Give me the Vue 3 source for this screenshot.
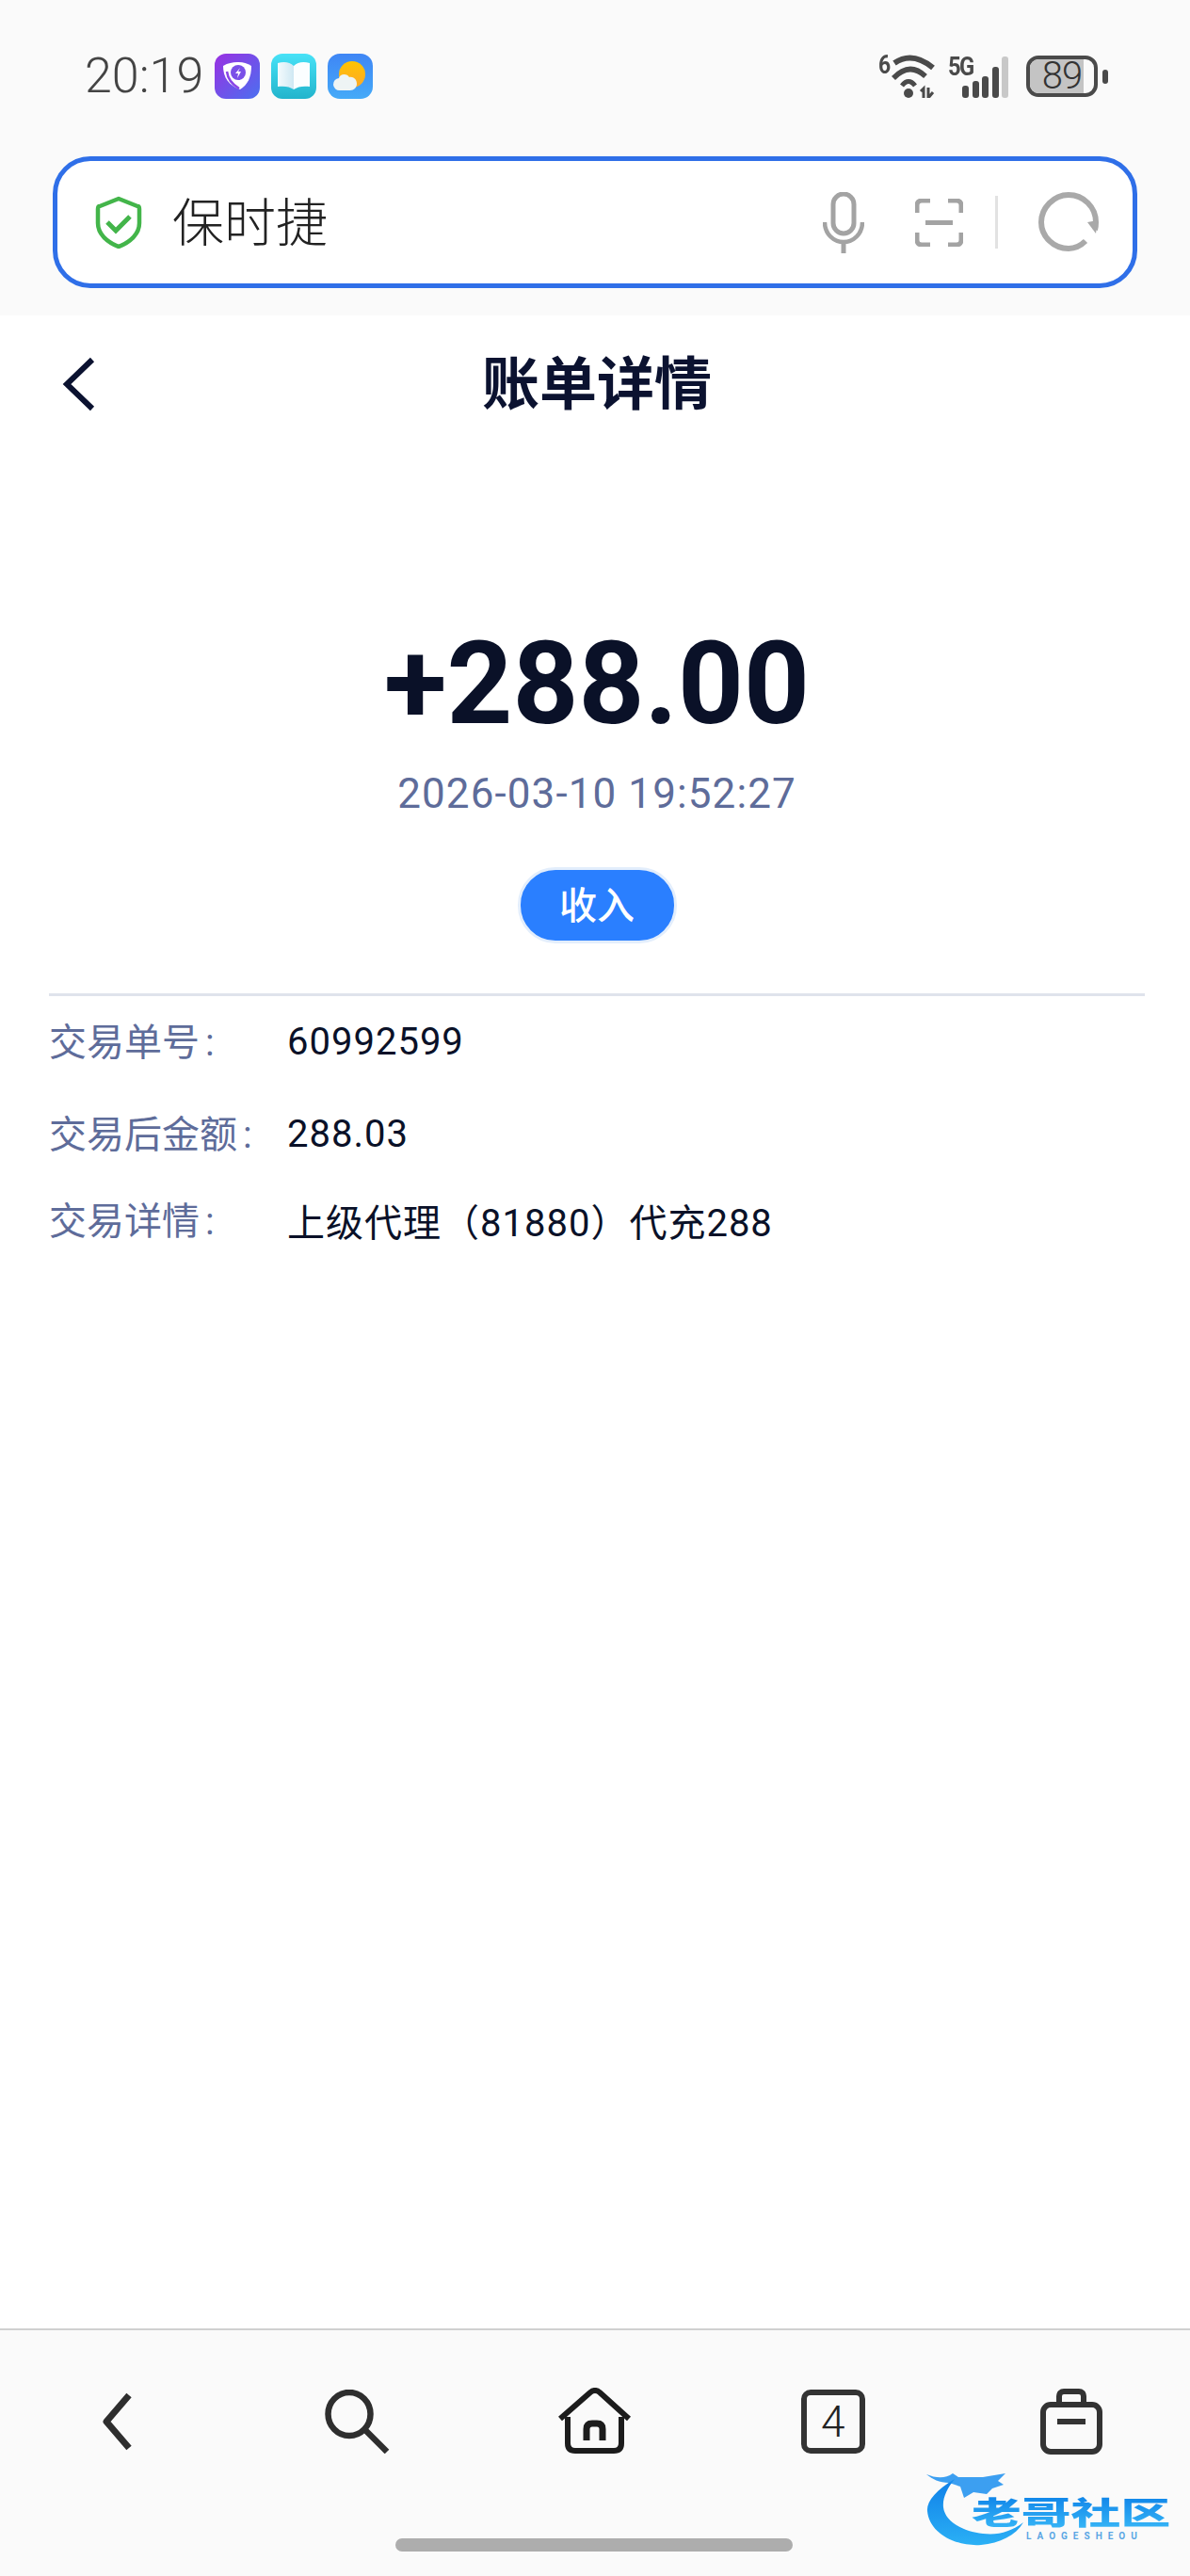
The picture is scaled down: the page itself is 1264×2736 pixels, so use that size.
<template>
  <div class="page">
    <!-- 状态栏 + 地址栏 -->
    <header class="browser-top">
      <div class="status-bar">
        <span class="time">20:19</span>
        <div class="app-icons">
          <svg class="app-icon" viewBox="0 0 48 48">
            <defs>
              <linearGradient id="purple" x1="0" y1="0" x2="1" y2="1">
                <stop offset="0" stop-color="#9a30e2" />
                <stop offset="1" stop-color="#4a70f0" />
              </linearGradient>
            </defs>
            <rect width="48" height="48" rx="12" fill="url(#purple)" />
            <path d="M9 13c5-3 10-4 15-4 5 0 10 1 15 4 0 12-4 20-12 25C15 34 9 25 9 13z" fill="#fff" />
            <circle cx="25" cy="20" r="8" fill="#7a50e8" />
            <path d="M27 15l-5 6h3l-1 5 4-7h-3z" fill="#fff" />
            <path d="M13 19c1 8 6 14 13 18" fill="none" stroke="#8a46e6" stroke-width="2.500" />
          </svg>
          <svg class="app-icon" viewBox="0 0 48 48">
            <defs>
              <linearGradient id="teal" x1="0" y1="0" x2="0" y2="1">
                <stop offset="0" stop-color="#48e2f7" />
                <stop offset="1" stop-color="#22b4cc" />
              </linearGradient>
              <linearGradient id="page-left" x1="0" y1="0" x2="1" y2="0">
                <stop offset="0" stop-color="#f4fbfd" />
                <stop offset="1" stop-color="#cfe8f3" />
              </linearGradient>
            </defs>
            <rect width="48" height="48" rx="12" fill="url(#teal)" />
            <path d="M7 10c7-2 13-1 17 3v25c-4-3-10-4-17-3z" fill="url(#page-left)" />
            <path d="M41 10c-7-2-13-1-17 3v25c4-3 10-4 17-3z" fill="#fbfeff" />
          </svg>
          <svg class="app-icon" viewBox="0 0 48 48">
            <defs>
              <linearGradient id="sky" x1="0" y1="0" x2="0" y2="1">
                <stop offset="0" stop-color="#3f86f5" />
                <stop offset="1" stop-color="#45aaf8" />
              </linearGradient>
              <linearGradient id="sun" x1="0" y1="0" x2="0" y2="1">
                <stop offset="0" stop-color="#ffc400" />
                <stop offset="1" stop-color="#fda92a" />
              </linearGradient>
            </defs>
            <rect width="48" height="48" rx="13" fill="url(#sky)" />
            <circle cx="26" cy="22" r="14" fill="url(#sun)" />
            <path d="M13 39a6.500 6.500 0 0 1-1-13c1-5 9-5 11-1 4-1 8 2 8 7 0 4-3 7-7 7z" fill="#eef4f4" />
          </svg>
        </div>
        <div class="status-right">
          <div class="wifi">
            <span class="wifi-six">6</span>
            <svg class="wifi-icon" viewBox="0 0 62 46">
              <path d="M17 9Q36-4 58 14" fill="none" stroke="#4a4a4a" stroke-width="6" />
              <path d="M16 25Q33 7 50 23" fill="none" stroke="#4a4a4a" stroke-width="5.500" />
              <path d="M25 33Q32 24 39 33" fill="none" stroke="#4a4a4a" stroke-width="5" />
              <circle cx="32" cy="41" r="5" fill="#4a4a4a" />
              <path d="M48 46V36l-3 3M53 35v11l5-6" fill="none" stroke="#4a4a4a" stroke-width="3" />
            </svg>
          </div>
          <div class="signal">
            <span class="five-g">5G</span>
            <div class="bars">
              <i class="bar" v-for="b in signalBars" :key="b.h" :class="{ off: b.off }" :style="{ height: b.h + 'px' }"></i>
            </div>
          </div>
          <div class="battery">
            <div class="battery-body">
              <div class="battery-fill"></div>
              <span class="battery-num">89</span>
            </div>
            <div class="battery-nub"></div>
          </div>
        </div>
      </div>

      <div class="address-bar">
        <svg class="shield" viewBox="0 0 50 56">
          <path d="M25 3l20 8c1 0 2 1 2 3v15c0 11-9 20-22 25C12 49 3 40 3 29V14c0-2 1-3 2-3z" fill="none" stroke="#43b54a" stroke-width="4.500" stroke-linejoin="round" />
          <path d="M13 28l9 9 15-15" fill="none" stroke="#43b54a" stroke-width="5" />
        </svg>
        <span class="address-text">保时捷</span>
        <svg class="mic" viewBox="0 0 44 65">
          <rect x="11" y="2" width="22" height="42" rx="11" fill="none" stroke="#a3a3a3" stroke-width="5" />
          <path d="M2 32c0 12 9 21 20 21s20-9 20-21" fill="none" stroke="#a3a3a3" stroke-width="4.500" />
          <path d="M22 52v13" stroke="#a3a3a3" stroke-width="5" />
        </svg>
        <svg class="scan" viewBox="0 0 51 51">
          <path d="M2 15V7c0-3 2-5 5-5h9M35 2h9c3 0 5 2 5 5v8M2 36v8c0 3 2 5 5 5h9M35 49h9c3 0 5-2 5-5v-8" fill="none" stroke="#a3a3a3" stroke-width="5" />
          <path d="M11 25.500h29" stroke="#a3a3a3" stroke-width="5" />
        </svg>
        <div class="address-divider"></div>
        <svg class="reload" viewBox="0 0 64 64">
          <path d="M50 52C44 58 38 60 32 60 16 60 3 47 3 32S16 3 32 3s29 13 29 29c0 3 0 5-1 8" fill="none" stroke="#a9a9a9" stroke-width="6" />
          <path d="M52 32l9 12 2-14z" fill="#a9a9a9" />
        </svg>
      </div>
    </header>

    <!-- 账单详情 -->
    <main class="detail">
      <div class="nav-bar">
        <svg class="nav-back" viewBox="0 0 36 58">
          <path d="M32 3L5 29l27 26" fill="none" stroke="#0b1230" stroke-width="6" />
        </svg>
        <h1 class="nav-title">账单详情</h1>
      </div>

      <div class="summary">
        <div class="amount">+288.00</div>
        <div class="date">2026-03-10 19:52:27</div>
        <div class="tag">收入</div>
      </div>

      <div class="rows">
        <div class="row" v-for="row in rows" :key="row.label" :class="row.cls">
          <span class="row-label">{{ row.label }}<span class="colon">:</span></span>
          <span class="row-value">{{ row.value }}</span>
        </div>
      </div>
    </main>

    <!-- 底部工具栏 -->
    <footer class="toolbar">
      <div class="tools">
        <svg class="tool-back" viewBox="0 0 34 62">
          <path d="M30 3L6 31l24 28" fill="none" stroke="#2e2e2e" stroke-width="7" stroke-linejoin="round" />
        </svg>
        <svg class="tool-search" viewBox="0 0 69 68">
          <ellipse cx="26" cy="26" rx="22.500" ry="23" fill="none" stroke="#2e2e2e" stroke-width="6.500" />
          <path d="M42 42l24 24" stroke="#2e2e2e" stroke-width="6.500" />
        </svg>
        <svg class="tool-home" viewBox="0 0 81 72">
          <path d="M4 33L36 5q5-4 10 0l31 28" fill="none" stroke="#1c1c1c" stroke-width="6" />
          <path d="M12 31v28q0 8 8 8h41q8 0 8-8V31" fill="none" stroke="#1c1c1c" stroke-width="6" />
          <path d="M32 56V44q0-6 6-6h5q6 0 6 6v12" fill="none" stroke="#1c1c1c" stroke-width="7" />
        </svg>
        <div class="tool-tabs">4</div>
        <svg class="tool-bag" viewBox="0 0 66 70">
          <rect x="3" y="17" width="60" height="50" rx="8" fill="none" stroke="#333" stroke-width="6" />
          <path d="M20 17V8c0-3 2-5 5-5h16c3 0 5 2 5 5v9" fill="none" stroke="#333" stroke-width="6" />
          <path d="M18 35h30" stroke="#333" stroke-width="6" />
        </svg>
      </div>
      <div class="home-indicator"></div>

      <!-- 水印 -->
      <div class="watermark">
        <svg class="dragon" viewBox="0 0 120 90">
          <defs>
            <linearGradient id="dragon-blue" x1="0" y1="0" x2="0" y2="1">
              <stop offset="0" stop-color="#0f7fe8" />
              <stop offset="1" stop-color="#2bb0f5" />
            </linearGradient>
          </defs>
          <path d="M30 18C10 30 0 42 1 52c2 24 31 38 57 36 20-2 37-10 45-24-13 10-27 14-43 12C40 74 20 64 18 48c-1-10 4-20 12-30z" fill="url(#dragon-blue)" />
          <path d="M0 13c10 4 20 5 28-1l6 4h26l24-4-8 8 6 4-12 4-6 6-14-2-10 6-4-12-12-4C14 22 6 18 0 13z" fill="#1a8eee" opacity="0.85" />
        </svg>
        <span class="wm-title">老哥社区</span>
        <span class="wm-sub">LAOGESHEOU</span>
      </div>
    </footer>
  </div>
</template>

<script setup>
const signalBars = [
  { h: 13 },
  { h: 18 },
  { h: 23 },
  { h: 33 },
  { h: 44, off: true }
]

const rows = [
  { label: '交易单号', value: '60992599', cls: 'row-first' },
  { label: '交易后金额', value: '288.03', cls: 'row-second' },
  { label: '交易详情', value: '上级代理（81880）代充288', cls: 'row-third' }
]
</script>

<style>
html,
body {
  margin: 0;
  background: #fff;
}
</style>

<style scoped>
.page {
  width: 1264px;
  height: 2736px;
  display: flex;
  flex-direction: column;
  background: #fff;
  font-family: Roboto, "Noto Sans CJK SC", sans-serif;
  overflow: hidden;
}

/* 顶部 */
.browser-top {
  height: 335px;
  box-sizing: border-box;
  padding: 57px 56px 0;
  background: #fafafa;
}

.status-bar {
  height: 48px;
  display: flex;
  align-items: center;
  padding-left: 34px;
  margin-right: -56px;
  margin-bottom: 61px;
}

.time {
  width: 138px;
  font-size: 52px;
  font-weight: 300;
  line-height: 48px;
  color: #444;
}

.app-icons {
  display: flex;
  gap: 12px;
}

.app-icon {
  width: 48px;
  height: 48px;
}

.status-right {
  margin-left: auto;
  padding-right: 87px;
  display: flex;
  align-items: flex-start;
  height: 46px;
}

.wifi {
  position: relative;
  width: 62px;
  height: 46px;
}

.wifi-six {
  position: absolute;
  left: 0;
  top: -3px;
  font-size: 27px;
  font-weight: 700;
  color: #4a4a4a;
  line-height: 28px;
  transform: scaleX(0.85);
  transform-origin: left top;
}

.wifi-icon {
  width: 62px;
  height: 46px;
}

.signal {
  position: relative;
  width: 64px;
  height: 46px;
  margin-left: 12px;
}

.five-g {
  position: absolute;
  left: 0;
  top: 0;
  font-size: 28px;
  font-weight: 700;
  line-height: 26px;
  letter-spacing: -2px;
  color: #4a4a4a;
  transform: scaleX(0.85);
  transform-origin: left top;
}

.bars {
  position: absolute;
  right: 0;
  bottom: 0;
  display: flex;
  align-items: flex-end;
  gap: 3.5px;
}

.bar {
  width: 7px;
  background: #4a4a4a;
  border-radius: 3px;
}

.bar.off {
  background: #c8c8c8;
}

.battery {
  display: flex;
  align-items: center;
  margin-left: 19px;
  height: 46px;
}

.battery-body {
  position: relative;
  width: 76px;
  height: 44px;
  box-sizing: border-box;
  border: 4px solid #4a4a4a;
  border-radius: 13px;
}

.battery-fill {
  width: 84%;
  height: 100%;
  border-radius: 9px 0 0 9px;
  background: #c4c4c4;
}

.battery-num {
  position: absolute;
  left: 0;
  right: 0;
  top: 0;
  text-align: center;
  font-size: 40px;
  font-weight: 300;
  letter-spacing: -1px;
  line-height: 36px;
  color: #333;
}

.battery-nub {
  width: 6px;
  height: 15px;
  margin-left: 5px;
  border-radius: 3px;
  background: #4a4a4a;
}

.address-bar {
  height: 140px;
  box-sizing: border-box;
  display: flex;
  align-items: center;
  padding: 0 36px 0 40px;
  border: 5px solid #2f6fe8;
  border-radius: 40px;
  background: #fff;
}

.shield {
  width: 50px;
  height: 56px;
  flex: none;
}

.address-text {
  margin-left: 32px;
  padding-top: 2px;
  font-size: 55px;
  font-weight: 300;
  line-height: 60px;
  color: #222;
}

.mic {
  width: 44px;
  height: 65px;
  margin-left: auto;
  margin-right: 54px;
}

.scan {
  width: 51px;
  height: 51px;
  margin-right: 34px;
}

.address-divider {
  width: 3px;
  height: 56px;
  margin-right: 43px;
  background: #e2e2e2;
}

.reload {
  width: 64px;
  height: 64px;
}

/* 内容 */
.detail {
  flex: 1;
  padding: 0 48px 0 52px;
}

.nav-bar {
  position: relative;
  height: 148px;
  box-sizing: border-box;
  padding-bottom: 10px;
  display: flex;
  align-items: center;
  justify-content: center;
}

.nav-back {
  position: absolute;
  left: 14px;
  top: 44px;
  width: 36px;
  height: 58px;
}

.nav-title {
  margin: 0;
  font-size: 61px;
  font-weight: 700;
  line-height: 80px;
  color: #0b1230;
  font-family: "Noto Sans CJK SC", sans-serif;
}

.summary {
  display: flex;
  flex-direction: column;
  align-items: center;
  padding-top: 174px;
  height: 572px;
  box-sizing: border-box;
}

.amount {
  font-size: 122px;
  font-weight: 700;
  line-height: 140px;
  color: #0a1128;
}

.date {
  margin-top: 20px;
  font-size: 44px;
  line-height: 52px;
  letter-spacing: 1.1px;
  color: #5e6c9a;
}

.tag {
  margin-top: 52px;
  width: 163px;
  height: 69px;
  padding-bottom: 6px;
  display: flex;
  align-items: center;
  justify-content: center;
  border: 3px solid #e3eefc;
  border-radius: 40px;
  background: #2a7fff;
  color: #fff;
  font-size: 40px;
  font-weight: 500;
  font-family: "Noto Sans CJK SC", sans-serif;
}

.rows {
  border-top: 3px solid #dfe3ec;
}

.row {
  display: flex;
  align-items: center;
  height: 56px;
  font-size: 40px;
}

.row-first {
  margin-top: 20px;
}

.row-second {
  margin-top: 42px;
}

.row-third {
  margin-top: 36px;
}

.row-label {
  width: 253px;
  flex: none;
  margin-bottom: 4px;
  color: #5e6c9a;
}

.colon {
  margin-left: 6px;
}

.row-value {
  letter-spacing: 1px;
  color: #0a1128;
}

/* 底部 */
.toolbar {
  position: relative;
  height: 263px;
  box-sizing: border-box;
  border-top: 2px solid #d0d0d0;
  background: #fafafa;
}

.tools {
  display: grid;
  grid-template-columns: repeat(5, 1fr);
  align-items: center;
  justify-items: center;
  height: 72px;
  margin-top: 61px;
}

.tool-back {
  width: 34px;
  height: 62px;
  margin-right: 4px;
}

.tool-search {
  width: 69px;
  height: 68px;
}

.tool-home {
  width: 81px;
  height: 72px;
}

.tool-tabs {
  width: 68px;
  height: 68px;
  box-sizing: border-box;
  display: flex;
  align-items: center;
  justify-content: center;
  border: 6px solid #333;
  border-radius: 10px;
  font-size: 46px;
  font-weight: 300;
  color: #222;
}

.tool-bag {
  width: 66px;
  height: 70px;
}

.home-indicator {
  width: 422px;
  height: 14px;
  margin: 88px 0 0 420px;
  border-radius: 7px;
  background: #adadad;
}

.watermark {
  position: absolute;
  left: 984px;
  top: 140px;
  width: 262px;
  height: 90px;
}

.dragon {
  position: absolute;
  left: 0;
  top: 0;
  width: 120px;
  height: 90px;
}

.wm-title {
  position: absolute;
  left: 48px;
  top: 34px;
  font-size: 33px;
  font-weight: 900;
  line-height: 36px;
  white-space: nowrap;
  font-family: "Noto Sans CJK SC", sans-serif;
  background: linear-gradient(180deg, #0e82e8, #35b4f6);
  -webkit-background-clip: text;
  background-clip: text;
  color: transparent;
  transform: scaleX(1.6);
  transform-origin: left top;
}

.wm-sub {
  position: absolute;
  left: 106px;
  top: 73px;
  font-size: 10px;
  line-height: 12px;
  letter-spacing: 6px;
  white-space: nowrap;
  color: #5ba6e4;
  font-weight: 700;
}
</style>
